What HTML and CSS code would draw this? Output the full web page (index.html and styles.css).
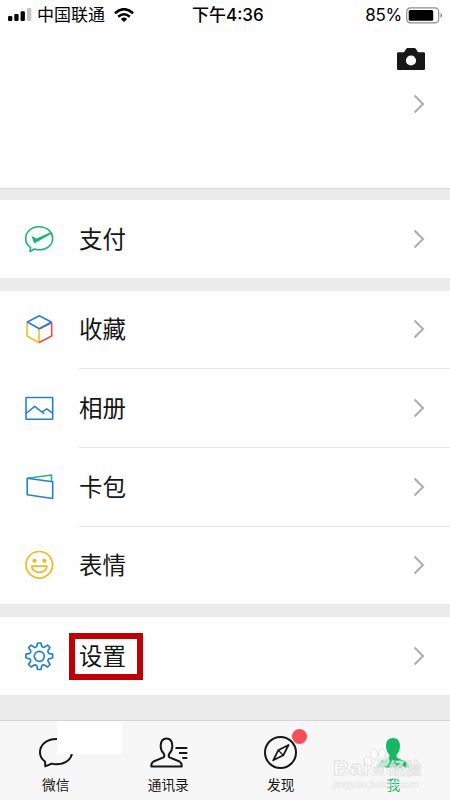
FILE: index.html
```html
<!DOCTYPE html>
<html lang="zh-CN">
<head>
<meta charset="utf-8">
<title>我</title>
<link rel="stylesheet" href="styles.css">
</head>
<body>
<div class="phone">
  <header class="top">
    <div class="status">
      <div class="status-left">
        <svg class="signal" width="24" height="14" viewBox="0 0 24 14"><rect x="0" y="8" width="4.3" height="5" rx="1.2"/><rect x="6.3" y="6" width="4.3" height="7" rx="1.2"/><rect x="12.6" y="3.3" width="4.3" height="9.7" rx="1.2"/><rect x="19" y="0" width="4.3" height="13" rx="1.2" fill="#c4c4c4"/></svg>
        <span class="carrier">中国联通</span>
        <svg class="wifi" width="20" height="14" viewBox="0 0 20 14"><g fill="none" stroke="#000" stroke-width="2.5"><path d="M.9 5.2Q10-2.8 19.1 5.2"/><path d="M4.2 8.8Q10 3.7 15.8 8.8"/></g><path d="M6.8 10.9Q10 8 13.2 10.9L10 14Z"/></svg>
      </div>
      <div class="clock">下午4:36</div>
      <div class="status-right">
        <span class="percent">85%</span>
        <svg width="37" height="17" viewBox="0 0 37 17"><rect x=".7" y=".9" width="32" height="15" rx="3.8" fill="none" stroke="#8d8d8d" stroke-width="1.2"/><rect x="2.7" y="3" width="24.5" height="10.8" rx="1.5"/><path d="M34.600 5.800q2.800 2.600 0 5.200z" fill="#777"/></svg>
      </div>
    </div>
    <div class="camera"><svg width="30" height="24" viewBox="0 0 30 24"><path fill="#181818" fill-rule="evenodd" d="M2.200 5.300H8L10.200 1.700Q10.700 1 11.500 1h7Q19.300 1 19.800 1.700L22 5.300h5.800Q29 5.300 29 6.500v15.200Q29 23 27.800 23H2.200Q1 23 1 21.700V6.500Q1 5.300 2.200 5.300ZM15 8.400a5.100 5.100 0 1 0 0 10.200a5.100 5.100 0 0 0 0-10.200Z"/></svg></div>
    <div class="profile"><svg class="arrow" viewBox="0 0 12 20"><path d="M1.500 1.500 10 10l-8.500 8.500"/></svg></div>
  </header>

  <main class="menu">
    <section class="group">
      <div class="row">
        <svg class="icon" viewBox="0 0 30 30"><path d="M6.500 23.500C3.300 21.300 1.700 18.300 1.700 14.700 1.700 7.500 7.600 2.700 15.200 2.700S28.600 7.700 28.600 14.400 22.700 25.800 15.200 25.800Q12.500 25.800 10.500 25L6 27.500Z" fill="none" stroke="#1db575" stroke-width="1.600" stroke-linejoin="round"/><path d="M7.400 11.700 12.500 14.600 27 8 28 9.500 11.200 19Q10.200 19.500 9.800 18.500Z" fill="#1db575"/></svg>
        <span class="label">支付</span>
        <svg class="arrow" viewBox="0 0 12 20"><path d="M1.500 1.500 10 10l-8.500 8.500"/></svg>
      </div>
    </section>
    <section class="group">
      <div class="row">
        <svg class="icon" viewBox="0 0 30 30"><g fill="none" stroke-width="1.600" stroke-linecap="round" stroke-linejoin="round"><path stroke="#edbd27" d="M3 8.700V22L15 28.700V15.200"/><path stroke="#e75155" d="M15.600 28.300 27.700 22V8.700L16.200 14.500"/><path stroke="#2b7fc8" d="M3.400 8 15.300 1.700 27.300 8 15.300 14.700Z"/></g></svg>
        <span class="label">收藏</span>
        <svg class="arrow" viewBox="0 0 12 20"><path d="M1.500 1.500 10 10l-8.500 8.500"/></svg>
      </div>
      <div class="row">
        <svg class="icon" viewBox="0 0 30 30"><g fill="none" stroke="#2482cb" stroke-width="1.600" stroke-linejoin="round"><rect x="2" y="4.500" width="26.700" height="21.700" rx=".5"/><path d="M2 20.500 10.700 13.300 19 19.800 20 21M18.200 18.800 22.700 15.800 28.500 20.200"/></g></svg>
        <span class="label">相册</span>
        <svg class="arrow" viewBox="0 0 12 20"><path d="M1.500 1.500 10 10l-8.500 8.500"/></svg>
      </div>
      <div class="row">
        <svg class="icon" viewBox="0 0 30 30"><g fill="none" stroke-width="1.600" stroke-linejoin="round"><path stroke="#28b77a" d="M4 6.300 27.500 3V9"/><path stroke="#2482cb" d="M3.200 6.300 28.700 9.800V26.500L3.200 22.700Z"/></g></svg>
        <span class="label">卡包</span>
        <svg class="arrow" viewBox="0 0 12 20"><path d="M1.500 1.500 10 10l-8.500 8.500"/></svg>
      </div>
      <div class="row">
        <svg class="icon" viewBox="0 0 30 30"><g fill="none" stroke="#e9bd25" stroke-width="1.700"><circle cx="15.300" cy="14.800" r="13.300"/><path stroke-linejoin="round" d="M7.700 16.200H23Q22.300 22.300 15.300 22.300T7.700 16.200Z"/></g><circle cx="10.500" cy="10.800" r="2.100" fill="#e9bd25"/><circle cx="20.300" cy="10.800" r="2.100" fill="#e9bd25"/></svg>
        <span class="label">表情</span>
        <svg class="arrow" viewBox="0 0 12 20"><path d="M1.500 1.500 10 10l-8.500 8.500"/></svg>
      </div>
    </section>
    <section class="group">
      <div class="row">
        <svg class="icon" viewBox="0 0 30 30"><g fill="none" stroke="#2482cb" stroke-width="1.700" stroke-linejoin="round"><circle cx="15.300" cy="15.300" r="5"/><path d="M13.600 2h3.400l.8 3.500q1.200 1.200 2.700.6l3-2 2.500 2.500-2 3q-.5 1.600.7 2.700l3.900.9v3.800l-3.900.8q-1.200 1.200-.6 2.700l2 3-2.600 2.500-3-2q-1.500-.6-2.700.6L17 28.500h-3.400l-.8-3.900q-1.200-1.200-2.700-.6l-3 2-2.600-2.500 2-3q.6-1.500-.6-2.700L2 17v-3.800l3.900-.9q1.200-1.100.7-2.700l-2-3L7.100 4.100l3 2q1.500.6 2.700-.6Z"/></g></svg>
        <span class="label marked">设置</span>
        <svg class="arrow" viewBox="0 0 12 20"><path d="M1.500 1.500 10 10l-8.500 8.500"/></svg>
      </div>
    </section>
  </main>

  <nav class="tabs">
    <div class="tab">
      <svg viewBox="0 0 40 34"><path d="M9 26.500C5.800 24.300 4 21 4 17.200 4 9.600 11 4 20 4s16 5.500 16 13-7.100 12.300-16 12.300q-2.300 0-4.300-.7L9.300 31.300Z" fill="none" stroke="#161616" stroke-width="2" stroke-linejoin="round"/></svg>
      <span>微信</span>
      <i class="patch"></i>
    </div>
    <div class="tab">
      <svg viewBox="0 0 40 34"><g fill="none" stroke="#161616" stroke-width="2"><path stroke-linejoin="round" d="M14.500 22.400Q16 21 14.800 18.800Q11.400 15.200 11.700 10.500Q12 3.500 17.500 3.500T23.300 10.500Q23.600 15.200 20.300 18.800Q19 21 20.500 22.400L30.500 26.500Q33 28 32.700 31.500H2.300Q2 28 4.500 26.500Z"/><path d="M26.500 13H38.300M30 18H38.300M33.300 23H38.300"/></g></svg>
      <span>通讯录</span>
    </div>
    <div class="tab">
      <svg viewBox="0 0 40 34"><circle cx="19.500" cy="17.500" r="15.500" fill="none" stroke="#161616" stroke-width="2"/><path d="M27.500 10 22.300 20.300 12.200 25.300 17.200 15.300Z" fill="none" stroke="#161616" stroke-width="1.800" stroke-linejoin="round"/><path d="m17.200 15.300 5.100 5" stroke="#161616" stroke-width="1.200"/></svg>
      <span>发现</span>
      <i class="dot"></i>
    </div>
    <div class="tab active">
      <svg viewBox="0 0 40 34"><path fill="#16b864" d="M19 3C14.300 3 12 6 12 11Q12 16 15.200 19.500Q16.200 22.300 13.700 23.400L7.300 26Q3.300 28 3 32.500H35Q34.700 28 30.700 26L24.300 23.400Q21.800 22.300 22.800 19.500Q26 16 26 11C26 6 23.700 3 19 3Z"/></svg>
      <span>我</span>
    </div>
    <div class="watermark">
      <svg class="brand" width="92" height="34" viewBox="0 0 92 34"><g fill="#fff" fill-opacity=".7" stroke="#d6d6d6" stroke-opacity=".75" stroke-width=".8"><text class="latin" x="0" y="27" textLength="36" lengthAdjust="spacingAndGlyphs">Bai</text><ellipse cx="35" cy="13" rx="3.500" ry="4.800" transform="rotate(-20 35 13)"/><ellipse cx="41" cy="6" rx="3.500" ry="5"/><ellipse cx="49" cy="6" rx="3.500" ry="5"/><ellipse cx="53" cy="14" rx="3.200" ry="4.300" transform="rotate(20 53 14)"/><path d="M45 12C40 12 41 16 38 19 35 23 37 28 41 27Q45 26 49 27C54 28 56 23 52 19 49 16 50 12 45 12Z"/><text class="du" x="39" y="25">du</text><text class="han" x="56" y="26">经验</text></g></svg>
      <span class="site">jingyan.baidu.com</span>
    </div>
  </nav>
</div>
</body>
</html>
```
FILE: styles.css
```css
* { box-sizing: border-box; }
body {
  margin: 0;
  background: #ebebeb;
  color: #161616;
  font-family: "Liberation Sans", "Noto Sans CJK SC", sans-serif;
}
svg { display: block; flex: none; }
.phone {
  width: 450px;
  height: 800px;
  display: flex;
  flex-direction: column;
  overflow: hidden;
}
.top {
  height: 189px;
  background: #fefefe;
  border-bottom: 1px solid #d9d9d9;
}
.status {
  height: 30px;
  display: grid;
  grid-template-columns: 184px auto 1fr;
  align-items: center;
  padding: 0 7px 0 8px;
  font-family: Inter, "Noto Sans CJK SC", sans-serif;
  font-size: 17px;
  line-height: 28px;
  color: #000;
}
.status-left, .status-right { display: flex; align-items: center; }
.status-left { gap: 5px; }
.carrier { font-size: 17px; }
.wifi { margin-left: 4px; }
.clock { font-size: 17px; font-weight: 500; }
.status-right { justify-content: flex-end; gap: 4px; }
.percent { letter-spacing: -.3px; }
.camera {
  display: flex;
  justify-content: flex-end;
  padding: 17px 24px 0 0;
}
.profile {
  display: flex;
  justify-content: flex-end;
  padding: 23px 25px 0 0;
}
.arrow {
  width: 12px;
  height: 20px;
  fill: none;
  stroke: #adadad;
  stroke-width: 2;
}
.menu {
  display: flex;
  flex-direction: column;
  gap: 13px;
  padding-top: 11px;
}
.group { background: #fefefe; }
.row {
  height: 77.500px;
  display: flex;
  align-items: center;
  padding: 0 25px 0 24px;
  position: relative;
}
.row + .row {
  height: 78.800px;
  padding-top: 1px;
}
.row + .row::before {
  content: "";
  position: absolute;
  left: 79px;
  right: 0;
  top: 0;
  border-top: 1px solid #e6e6e6;
}
.icon { width: 30px; height: 30px; }
.label {
  margin-left: 25px;
  padding-top: 2px;
  font-size: 23.500px;
  line-height: 36px;
}
.row .arrow { margin-left: auto; }
.label.marked {
  margin-left: 15px;
  padding: 1px 11px 0 4px;
  border: 6px solid #bd0207;
  height: 47px;
  line-height: 34px;
}
.tabs {
  position: relative;
  margin-top: auto;
  height: 80px;
  display: grid;
  grid-template-columns: repeat(4, 1fr);
  background: #f7f7f7;
  border-top: 1px solid #d5d5d5;
}
.tab {
  position: relative;
  display: flex;
  flex-direction: column;
  align-items: center;
  padding-top: 14px;
  font-size: 13.700px;
  line-height: 20px;
}
.tab svg { width: 40px; height: 34px; margin-bottom: 7px; }
.tab span { margin-right: 1px; }
.active { color: #16b864; }
.patch {
  position: absolute;
  left: 57px;
  top: 0;
  width: 65px;
  height: 33px;
  background: #fff;
}
.dot {
  position: absolute;
  left: 67px;
  top: 8px;
  width: 15px;
  height: 15px;
  border-radius: 50%;
  background: #f64f59;
}
.watermark {
  position: absolute;
  left: 333px;
  top: 27px;
  width: 92px;
}
.latin { font: bold 21px "Liberation Sans", sans-serif; }
.du { font: bold 10px "Liberation Sans", sans-serif; }
.han { font: bold 16px "Noto Sans CJK SC", sans-serif; }
.site {
  display: block;
  font-size: 10.700px;
  line-height: 12px;
  color: rgba(255, 255, 255, .6);
  margin-top: -4px;
  text-shadow: 0 0 1px rgba(190, 190, 190, .7);
}
```
